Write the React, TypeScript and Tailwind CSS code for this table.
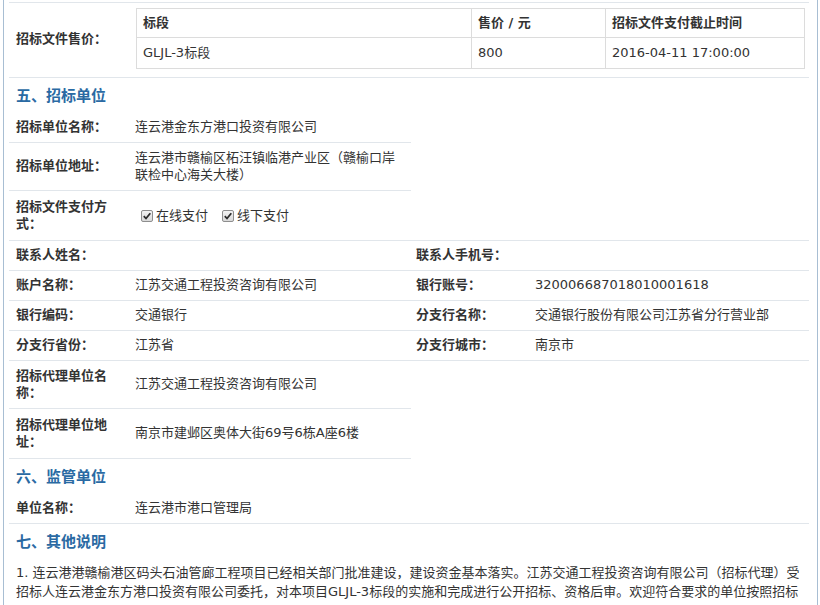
import React from 'react'

// Label cell: bold caption on the left of each row
function Label({ children }: { children: React.ReactNode }) {
  return (
    <div className="w-[126px] shrink-0 pl-[7px] pr-[20px] font-bold text-[#333] leading-[17px]">
      {children}
    </div>
  )
}

function Value({ children }: { children?: React.ReactNode }) {
  return <div className="w-[266px] text-[#333] leading-[17px]">{children}</div>
}

// Half-width row (only left column present)
function HalfRow({ label, value, h }: { label: React.ReactNode; value?: React.ReactNode; h: string }) {
  return (
    <div className={`flex items-center w-[402px] pb-[2px] border-b border-[#e1e6eb] ${h}`}>
      <Label>{label}</Label>
      <Value>{value}</Value>
    </div>
  )
}

// Full-width row with two label/value pairs
function PairRow({ l1, v1, l2, v2 }: { l1: string; v1?: string; l2: string; v2?: string }) {
  return (
    <div className="flex items-center h-[30px] pb-[2px] border-b border-[#e1e6eb]">
      <div className="flex items-center w-[400px]">
        <Label>{l1}</Label>
        <Value>{v1}</Value>
      </div>
      <div className="flex items-center flex-1">
        <Label>{l2}</Label>
        <Value>{v2}</Value>
      </div>
    </div>
  )
}

function Heading({ children }: { children: React.ReactNode }) {
  return (
    <div className="flex items-center h-[34px] pl-[7px] pt-[3px] text-[15px] font-bold text-[#2a6aa3]">
      {children}
    </div>
  )
}

function Check() {
  return (
    <svg width="12" height="12" viewBox="0 0 12 12" className="shrink-0">
      <defs>
        <linearGradient id="cb" x1="0" y1="0" x2="0" y2="1">
          <stop offset="0" stopColor="#f4f4f4" />
          <stop offset="1" stopColor="#d8d8d8" />
        </linearGradient>
      </defs>
      <rect x="0.5" y="0.5" width="11" height="11" rx="1.5" fill="url(#cb)" stroke="#8e8e8e" />
      <path d="M2.8 6.2 L5 8.5 L9.3 3.2" fill="none" stroke="#2b2b2b" strokeWidth="1.8" />
    </svg>
  )
}

export default function App() {
  return (
    <div className="font-['DejaVu_Sans','Noto_Sans_CJK_SC',sans-serif] text-[13px] bg-white min-h-[605px]">
      <div className="ml-[3px] w-[815px] min-h-[605px] border-x border-[#a8bed3] pl-[5px] pr-[8px] pt-[2px]">
        {/* document price table */}
        <div className="flex items-start h-[76px] border-y border-[#e1e6eb]">
          <div className="self-center pb-[4px]">
            <Label>招标文件售价：</Label>
          </div>
          <table className="mt-[5px] ml-[1px] w-[669px] border-collapse text-[#333]">
            <thead>
              <tr className="h-[29px]">
                <th className="w-[335px] border border-[#dcdcdc] pl-[6px] text-left font-bold">标段</th>
                <th className="w-[134px] border border-[#dcdcdc] pl-[6px] text-left font-bold">售价 / 元</th>
                <th className="border border-[#dcdcdc] pl-[6px] text-left font-bold">招标文件支付截止时间</th>
              </tr>
            </thead>
            <tbody>
              <tr className="h-[31px]">
                <td className="border border-[#dcdcdc] pl-[6px]">GLJL-3标段</td>
                <td className="border border-[#dcdcdc] pl-[6px]">800</td>
                <td className="border border-[#dcdcdc] pl-[6px]">2016-04-11 17:00:00</td>
              </tr>
            </tbody>
          </table>
        </div>

        <Heading>五、招标单位</Heading>
        <HalfRow h="h-[31px]" label="招标单位名称：" value="连云港金东方港口投资有限公司" />
        <HalfRow h="h-[48px]" label="招标单位地址：" value="连云港市赣榆区柘汪镇临港产业区（赣榆口岸联检中心海关大楼）" />
        <div className="flex items-center h-[50px] pb-[2px] border-b border-[#e1e6eb]">
          <Label>招标文件支付方式：</Label>
          <div className="flex items-center gap-[3px] pl-[6px] text-[#333] pt-[2px]">
            <Check />
            <span>在线支付</span>
            <span className="w-[8px]" />
            <Check />
            <span>线下支付</span>
          </div>
        </div>
        <PairRow l1="联系人姓名：" l2="联系人手机号：" />
        <PairRow l1="账户名称：" v1="江苏交通工程投资咨询有限公司" l2="银行账号：" v2="320006687018010001618" />
        <PairRow l1="银行编码：" v1="交通银行" l2="分支行名称：" v2="交通银行股份有限公司江苏省分行营业部" />
        <PairRow l1="分支行省份：" v1="江苏省" l2="分支行城市：" v2="南京市" />
        <HalfRow h="h-[48px]" label="招标代理单位名称：" value="江苏交通工程投资咨询有限公司" />
        <HalfRow h="h-[50px]" label="招标代理单位地址：" value="南京市建邺区奥体大街69号6栋A座6楼" />

        <Heading>六、监管单位</Heading>
        <div className="flex items-center h-[31px] pb-[2px] border-b border-[#e1e6eb]">
          <Label>单位名称：</Label>
          <Value>连云港市港口管理局</Value>
        </div>

        <Heading>七、其他说明</Heading>
        <p className="pl-[7px] pr-[5px] pt-[5px] leading-[19px] text-[#333]">
          1. 连云港港赣榆港区码头石油管廊工程项目已经相关部门批准建设，建设资金基本落实。江苏交通工程投资咨询有限公司（招标代理）受招标人连云港金东方港口投资有限公司委托，对本项目GLJL-3标段的实施和完成进行公开招标、资格后审。欢迎符合要求的单位按照招标
        </p>
      </div>
    </div>
  )
}
